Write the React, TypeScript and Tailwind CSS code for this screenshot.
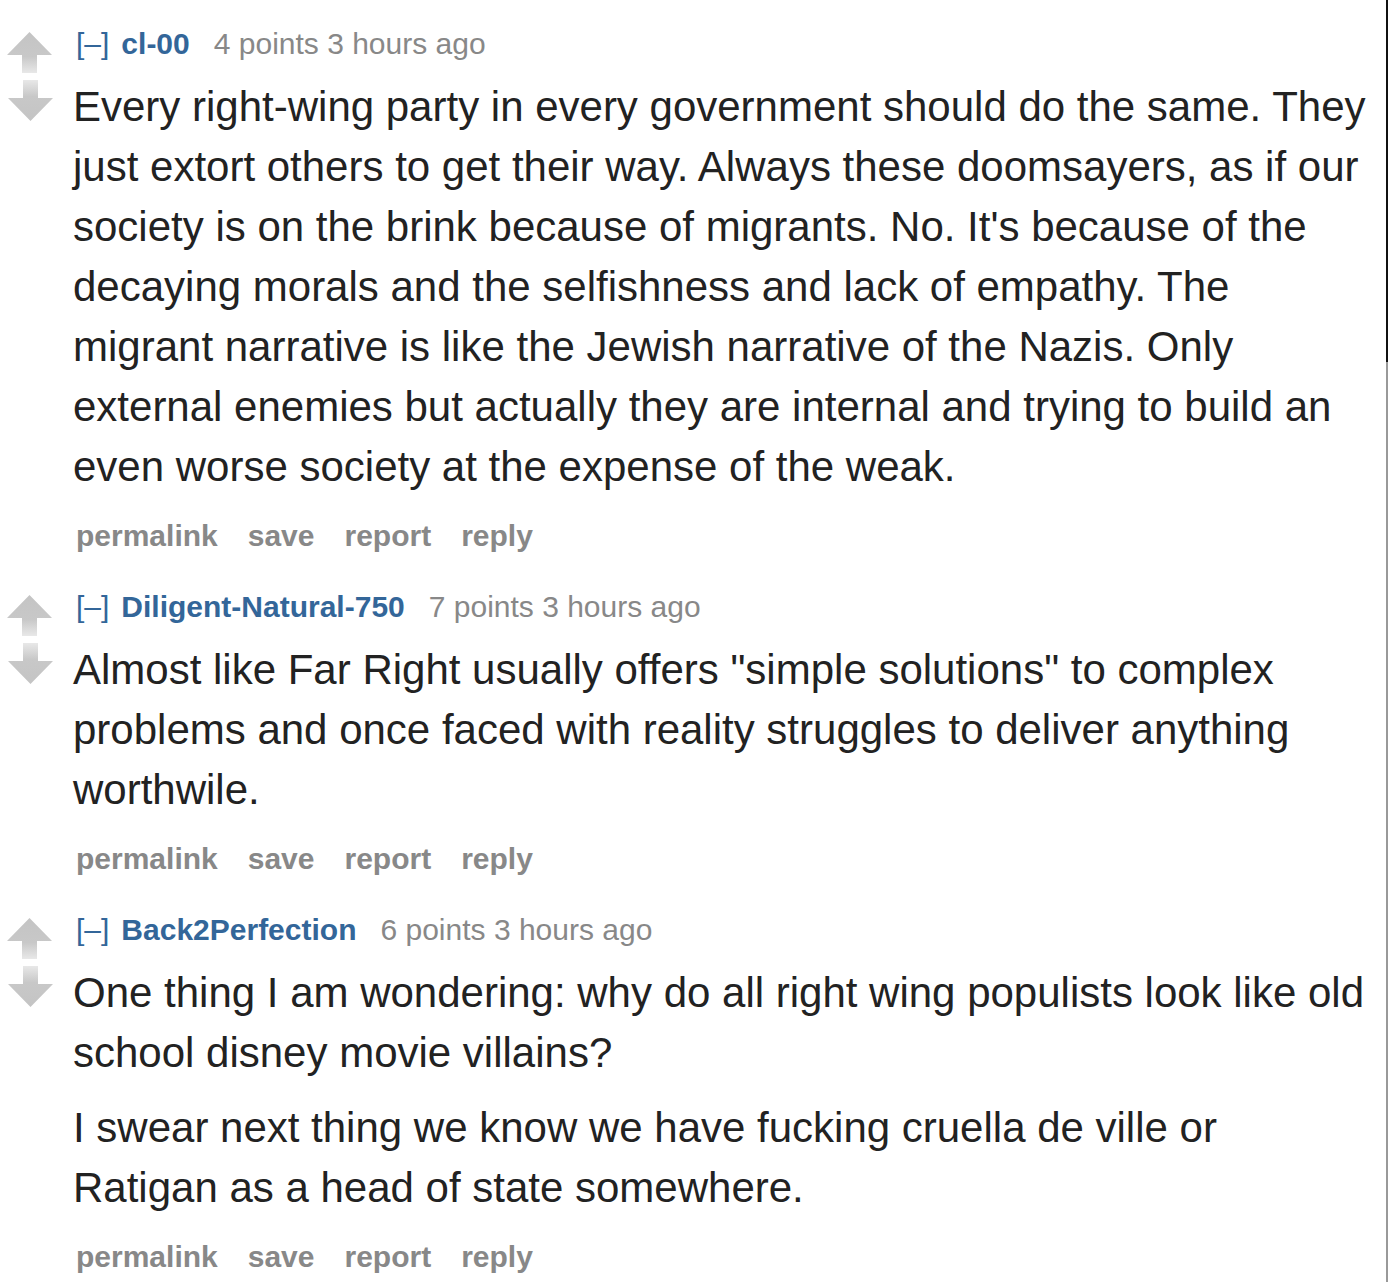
import React from 'react'

const comments = [
  {
    user: 'cl-00',
    points: '4 points',
    paras: [
      "Every right-wing party in every government should do the same. They just extort others to get their way. Always these doomsayers, as if our society is on the brink because of migrants. No. It's because of the decaying morals and the selfishness and lack of empathy. The migrant narrative is like the Jewish narrative of the Nazis. Only external enemies but actually they are internal and trying to build an even worse society at the expense of the weak.",
    ],
  },
  {
    user: 'Diligent-Natural-750',
    points: '7 points',
    paras: [
      'Almost like Far Right usually offers "simple solutions" to complex problems and once faced with reality struggles to deliver anything worthwile.',
    ],
  },
  {
    user: 'Back2Perfection',
    points: '6 points',
    paras: [
      'One thing I am wondering: why do all right wing populists look like old school disney movie villains?',
      'I swear next thing we know we have fucking cruella de ville or Ratigan as a head of state somewhere.',
    ],
  },
]

const Arrow = ({ down }: { down?: boolean }) => (
  <svg width="46" height="41" viewBox="0 0 46 41" className={down ? 'rotate-180' : ''}>
    <defs>
      <linearGradient id={down ? 'gd' : 'gu'} x1="0" y1="0" x2="0" y2="1">
        <stop offset="0" stopColor="#c4c4c4" />
        <stop offset="0.6" stopColor="#c8c8c8" />
        <stop offset="1" stopColor="#e8e8e8" />
      </linearGradient>
    </defs>
    <path d="M22.5 0 L45 23 L30 23 L30 41 L15 41 L15 23 L0 23 Z" fill={`url(#${down ? 'gd' : 'gu'})`} />
  </svg>
)

export default function App() {
  return (
    <div className="relative w-[1388px] h-[1282px] bg-white overflow-hidden font-['Liberation_Sans',Arial,sans-serif]">
      <div className="absolute right-0 top-0 w-[2px] h-[362px] bg-[#111]" />
      <div className="absolute right-0 top-[362px] w-[2px] h-[920px] bg-[#999]" />
      <div className="flex flex-col pt-[24px]">
        {comments.map((c, i) => (
          <div key={i} className="flex mb-[31px]">
            <div className="w-[73px] shrink-0 flex flex-col gap-[7px] pl-[7px] pt-[8px]">
              <Arrow />
              <Arrow down />
            </div>
            <div className="flex-1 pr-[20px]">
              <div className="flex items-baseline text-[30px] leading-[40px] whitespace-nowrap">
                <span className="text-[#336699] ml-[3px] mr-[12px]">[–]</span>
                <span className="font-bold text-[#336699] mr-[24px]">{c.user}</span>
                <span className="text-[#888]">{c.points} 3 hours ago</span>
              </div>
              <div className="mt-[13px] text-[42px] leading-[60px] text-[#222]">
                {c.paras.map((p, j) => (
                  <p key={j} className={j > 0 ? 'mt-[15px]' : ''}>{p}</p>
                ))}
              </div>
              <div className="mt-[19px] flex gap-[30px] pl-[3px] text-[30px] leading-[40px] font-bold text-[#888]">
                <span>permalink</span>
                <span>save</span>
                <span>report</span>
                <span>reply</span>
              </div>
            </div>
          </div>
        ))}
      </div>
    </div>
  )
}
